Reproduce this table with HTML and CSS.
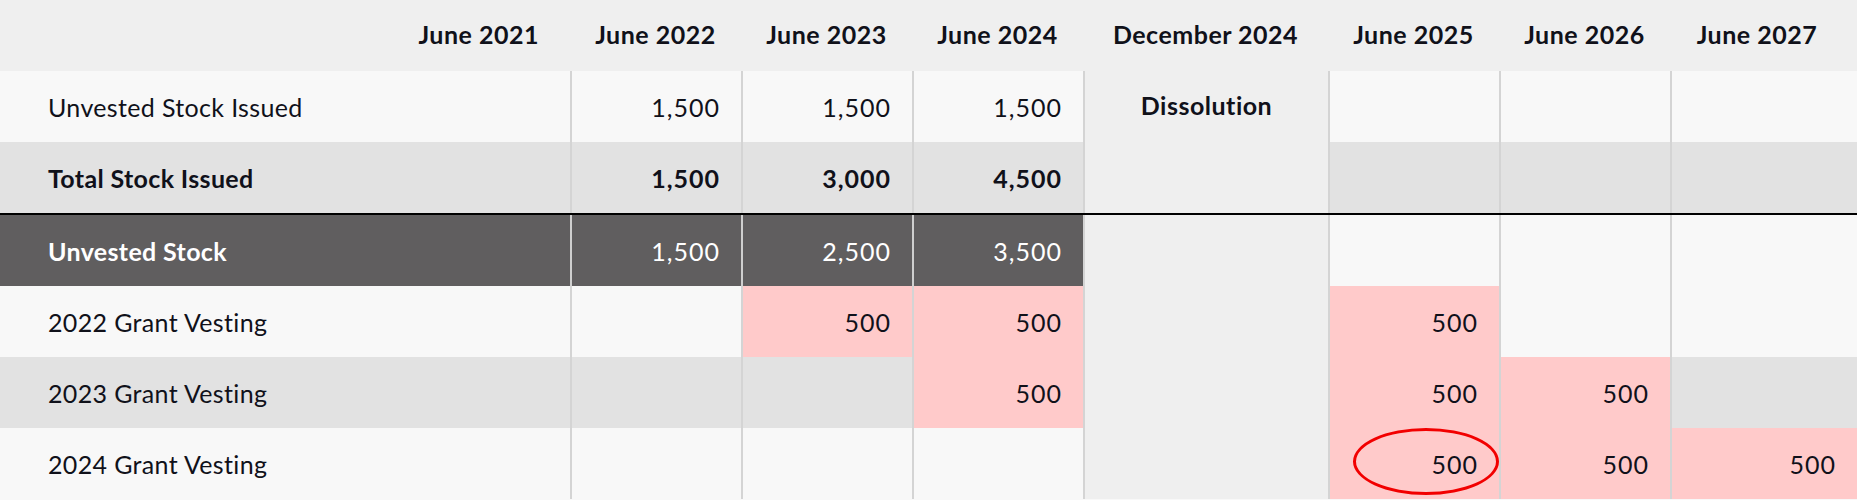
FILE: index.html
```html
<!DOCTYPE html>
<html lang="en">
<head>
<meta charset="utf-8">
<title>Stock vesting schedule</title>
<link rel="stylesheet" href="styles.css">
</head>
<body>
<div class="sheet">
  <div class="h h-first">June 2021</div>
  <div class="h">June 2022</div>
  <div class="h">June 2023</div>
  <div class="h">June 2024</div>
  <div class="h">December 2024</div>
  <div class="h">June 2025</div>
  <div class="h">June 2026</div>
  <div class="h h-last">June 2027</div>

  <div class="c lbl r-light">Unvested Stock Issued</div>
  <div class="c r-light">1,500</div>
  <div class="c r-light">1,500</div>
  <div class="c r-light">1,500</div>
  <div class="c dis dis-text">Dissolution</div>
  <div class="c r-light"></div>
  <div class="c r-light"></div>
  <div class="c r-light"></div>

  <div class="c lbl r-gray bold">Total Stock Issued</div>
  <div class="c r-gray bold">1,500</div>
  <div class="c r-gray bold">3,000</div>
  <div class="c r-gray bold">4,500</div>
  <div class="c dis"></div>
  <div class="c r-gray"></div>
  <div class="c r-gray"></div>
  <div class="c r-gray"></div>

  <div class="rule"></div>

  <div class="c lbl r-dark bold">Unvested Stock</div>
  <div class="c r-dark">1,500</div>
  <div class="c r-dark">2,500</div>
  <div class="c r-dark">3,500</div>
  <div class="c dis"></div>
  <div class="c r-light"></div>
  <div class="c r-light"></div>
  <div class="c r-light"></div>

  <div class="c lbl r-light">2022 Grant Vesting</div>
  <div class="c r-light"></div>
  <div class="c pink">500</div>
  <div class="c pink">500</div>
  <div class="c dis"></div>
  <div class="c pink">500</div>
  <div class="c r-light"></div>
  <div class="c r-light"></div>

  <div class="c lbl r-gray">2023 Grant Vesting</div>
  <div class="c r-gray"></div>
  <div class="c r-gray"></div>
  <div class="c pink">500</div>
  <div class="c dis"></div>
  <div class="c pink">500</div>
  <div class="c pink">500</div>
  <div class="c r-gray"></div>

  <div class="c lbl r-light">2024 Grant Vesting</div>
  <div class="c r-light"></div>
  <div class="c r-light"></div>
  <div class="c r-light"></div>
  <div class="c dis"></div>
  <div class="c pink marked">500<span class="ring"></span></div>
  <div class="c pink">500</div>
  <div class="c pink">500</div>
</div>
</body>
</html>
```

FILE: styles.css
```css
html, body {
  margin: 0;
  padding: 0;
  background: #f8f8f8;
}

.sheet {
  display: grid;
  grid-template-columns: 570px 171px 171px 171px 245px 171px 171px 1fr;
  grid-template-rows: 71px 71px 71px 2px 71px 71px 71px 71px;
  font-family: Lato, "Liberation Sans", sans-serif;
  font-size: 25px;
  color: #10111a;
  width: 1857px;
  height: 500px;
  overflow: hidden;
}

.h {
  background: #efefef;
  display: flex;
  align-items: center;
  justify-content: center;
  font-weight: 700;
  letter-spacing: 0.5px;
  padding-bottom: 3px;
  box-sizing: border-box;
  white-space: nowrap;
}

.h-first {
  justify-content: flex-end;
  padding-right: 31px;
}

.h-last {
  padding-right: 13px;
}

.c {
  display: flex;
  align-items: center;
  justify-content: flex-end;
  padding-right: 21px;
  letter-spacing: 1px;
  border-left: 2px solid #d4d4d4;
  box-sizing: border-box;
  white-space: nowrap;
}

.lbl {
  justify-content: flex-start;
  padding-left: 48px;
  padding-right: 0;
  letter-spacing: 0.35px;
  border-left: none;
}

.bold {
  font-weight: 700;
}

.r-light { background: #f8f8f8; }
.r-gray { background: #e2e2e2; }
.r-dark {
  background: #605e5f;
  color: #ffffff;
  border-left-color: #cfcfcf;
}
.pink { background: #ffcaca; }

.dis {
  background: #efefef;
}

.dis-text {
  justify-content: center;
  padding-right: 0;
  padding-bottom: 3px;
  letter-spacing: 0.5px;
  font-weight: 700;
}

.rule {
  grid-column: 1 / -1;
  background: #000000;
}

.marked {
  position: relative;
}

.ring {
  position: absolute;
  left: 23px;
  top: 0;
  width: 146px;
  height: 67px;
  box-sizing: border-box;
  border: 3px solid #f20000;
  border-radius: 50%;
}
```
